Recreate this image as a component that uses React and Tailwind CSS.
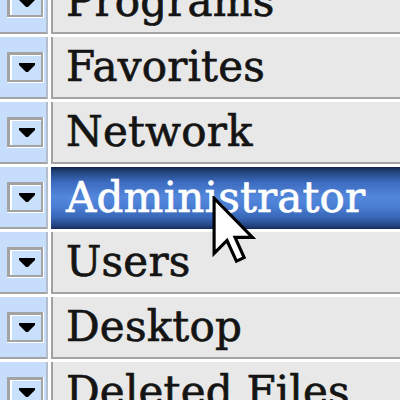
const items = ['Programs', 'Favorites', 'Network', 'Administrator', 'Users', 'Desktop', 'Deleted Files']

function DropButton() {
  return (
    <div className="ml-[7px] w-[37px] h-[31px] border-r border-b border-white">
      <div className="w-full h-full border-[3px] border-[#a3a3a3] border-r-2 border-b-2 bg-[#c8e0fc] flex items-center justify-center">
        <div className="w-full h-full border-l-2 border-t border-white flex items-center justify-center">
          <svg width="16" height="10" viewBox="0 0 16 10">
            <polygon points="0,0 16,0 16,2 9,9 7,9 0,2" fill="#000" />
          </svg>
        </div>
      </div>
    </div>
  )
}

function Cursor() {
  return (
    <svg className="absolute left-[212px] top-[196px]" width="44" height="68" viewBox="0 0 12.6 19.4">
      <polygon
        points="0.6,0.6 0.6,16.4 4.3,12.7 7,18.6 9.2,17.6 6.6,11.8 11.6,11.8"
        fill="#fff"
        stroke="#000"
        strokeWidth="0.9"
        strokeLinejoin="miter"
      />
    </svg>
  )
}

export default function App() {
  return (
    <div className="relative w-[400px] h-[400px] overflow-hidden bg-white" style={{ fontFamily: '"DejaVu Serif", serif' }}>
      <div className="flex flex-col gap-[3px] mt-[-28px]">
        {items.map(name => {
          const active = name === 'Administrator'
          return (
            <div key={name} className="flex gap-[3px] h-[62px] shrink-0">
              <div className="w-[48px] shrink-0 bg-[#c6defc] border-r-2 border-b-2 border-r-[#b3bfcc] border-b-[#a3a3a3] flex items-center">
                <DropButton />
              </div>
              {active ? (
                <div className="flex-1 flex items-center pl-[15px] bg-[linear-gradient(to_bottom,#132347_0%,#22457f_8%,#3d6cc0_25%,#5287dc_48%,#4c80d6_62%,#3766b6_82%,#22437c_95%,#16295a_100%)]">
                  <span className="text-[42px] leading-none text-white tracking-[0.2px] [-webkit-text-stroke:0.7px_#ffffff]">{name}</span>
                </div>
              ) : (
                <div className="flex-1 flex items-center pl-[13px] bg-[#e8e8e8] border-l-2 border-b-2 border-l-[#a0a0a0] border-b-[#a3a3a3]">
                  <span className="text-[42px] leading-none text-[#141414] tracking-[0.2px] [-webkit-text-stroke:0.7px_#141414]">{name}</span>
                </div>
              )}
            </div>
          )
        })}
      </div>
      <Cursor />
    </div>
  )
}
